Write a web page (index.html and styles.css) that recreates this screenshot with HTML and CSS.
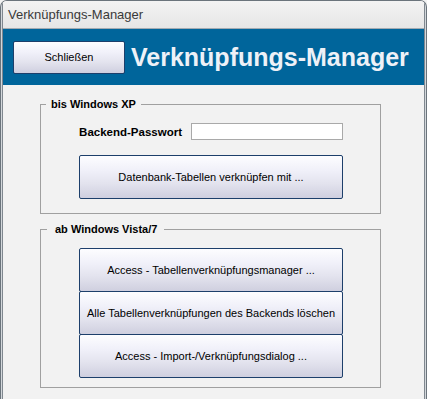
FILE: index.html
```html
<!DOCTYPE html>
<html lang="de">
<head>
    <meta charset="UTF-8">
    <title>Verknüpfungs-Manager</title>
    <link rel="stylesheet" href="styles.css">
</head>
<body>

    <div class="window">
        <div class="window-inner">
            <div class="titlebar">Verknüpfungs-Manager</div>

            <div class="form-header">
                <button class="access-button close-button">Schließen</button>
                <h1>Verknüpfungs-Manager</h1>
            </div>

            <div class="form-body">
                <fieldset class="group group-xp">
                    <legend>bis Windows XP</legend>
                    <div class="password-row">
                        <label for="backend-pw">Backend-Passwort</label>
                        <input type="text" id="backend-pw">
                    </div>
                    <div class="button-stack">
                        <button class="access-button">Datenbank-Tabellen verknüpfen mit ...</button>
                    </div>
                </fieldset>

                <fieldset class="group group-vista">
                    <legend>ab Windows Vista/7</legend>
                    <div class="button-stack">
                        <button class="access-button">Access - Tabellenverknüpfungsmanager ...</button>
                        <button class="access-button">Alle Tabellenverknüpfungen des Backends löschen</button>
                        <button class="access-button">Access - Import-/Verknüpfungsdialog ...</button>
                    </div>
                </fieldset>
            </div>
        </div>
    </div>

</body>
</html>
```

FILE: styles.css
```css
:root {
    --font-ui: "Liberation Sans", Arial, sans-serif;
    --frame-dark: #6b747c;
    --frame-light: #d3d7db;
    --header-blue: #00659b;
    --body-bg: #f2f2f2;
    --group-border: #a0a0a0;
    --button-border: #1d3f6b;
}

* { box-sizing: border-box; }

body {
    margin: 0;
    font-family: var(--font-ui);
    background-color: var(--body-bg);
}

.window {
    width: 427px;
    height: 399px;
    border: 1px solid var(--frame-dark);
    border-bottom: none;
    border-radius: 7px 7px 0 0;
    padding: 0 1px;
    background-color: var(--frame-light);
    overflow: hidden;
}

.window-inner {
    height: 100%;
    border-left: 1px solid #7f878f;
    border-right: 1px solid #7f878f;
    background-color: var(--body-bg);
}

.titlebar {
    height: 28px;
    padding-left: 5px;
    line-height: 27px;
    font-size: 13px;
    color: #3a3a3a;
    background: linear-gradient(#f3f3f3, #e6e6e6);
    border-bottom: 1px solid #a3abb2;
}

.form-header {
    height: 56px;
    display: flex;
    align-items: center;
    gap: 6px;
    padding-left: 10px;
    background-color: var(--header-blue);
}

.form-header h1 {
    margin: 0;
    font-size: 25px;
    font-weight: 700;
    color: #eef1f7;
}

.access-button {
    display: block;
    height: 44px;
    padding: 0;
    font-family: var(--font-ui);
    font-size: 11px;
    color: #000;
    border: 1px solid var(--button-border);
    border-radius: 2px;
    background: linear-gradient(#fdfdff 0%, #f0f0f9 35%, #e3e3ee 65%, #cfcfdf 100%);
    cursor: pointer;
}

.close-button {
    width: 112px;
    height: 33px;
}

.form-body {
    padding: 13px 0 0 37px;
}

.group {
    width: 341px;
    margin: 0;
    padding: 0;
    border: 1px solid var(--group-border);
}

.group legend {
    margin-left: 5px;
    padding: 0 5px;
    font-size: 11px;
    font-weight: 700;
    line-height: 13px;
    color: #000;
}

.group-vista {
    margin-top: 9px;
    padding-bottom: 9px;
}
.group-vista legend { padding: 0 7px 0 8px; margin-left: 6px; }

.group-xp { padding-bottom: 14px; }

.password-row {
    width: 264px;
    margin: 12px 0 0 38px;
    display: flex;
    justify-content: flex-end;
    align-items: center;
    gap: 9px;
}

.password-row label {
    font-size: 11.5px;
    font-weight: 700;
}

.password-row input {
    width: 152px;
    height: 17px;
    margin: 0;
    border: 1px solid #a9a9a9;
    background-color: #fff;
}

.button-stack {
    width: 264px;
    margin-left: 38px;
    display: flex;
    flex-direction: column;
}

.group-xp .button-stack { margin-top: 15px; }
.group-vista .button-stack { margin-top: 12px; }

.button-stack .access-button + .access-button { margin-top: -1px; }
```
